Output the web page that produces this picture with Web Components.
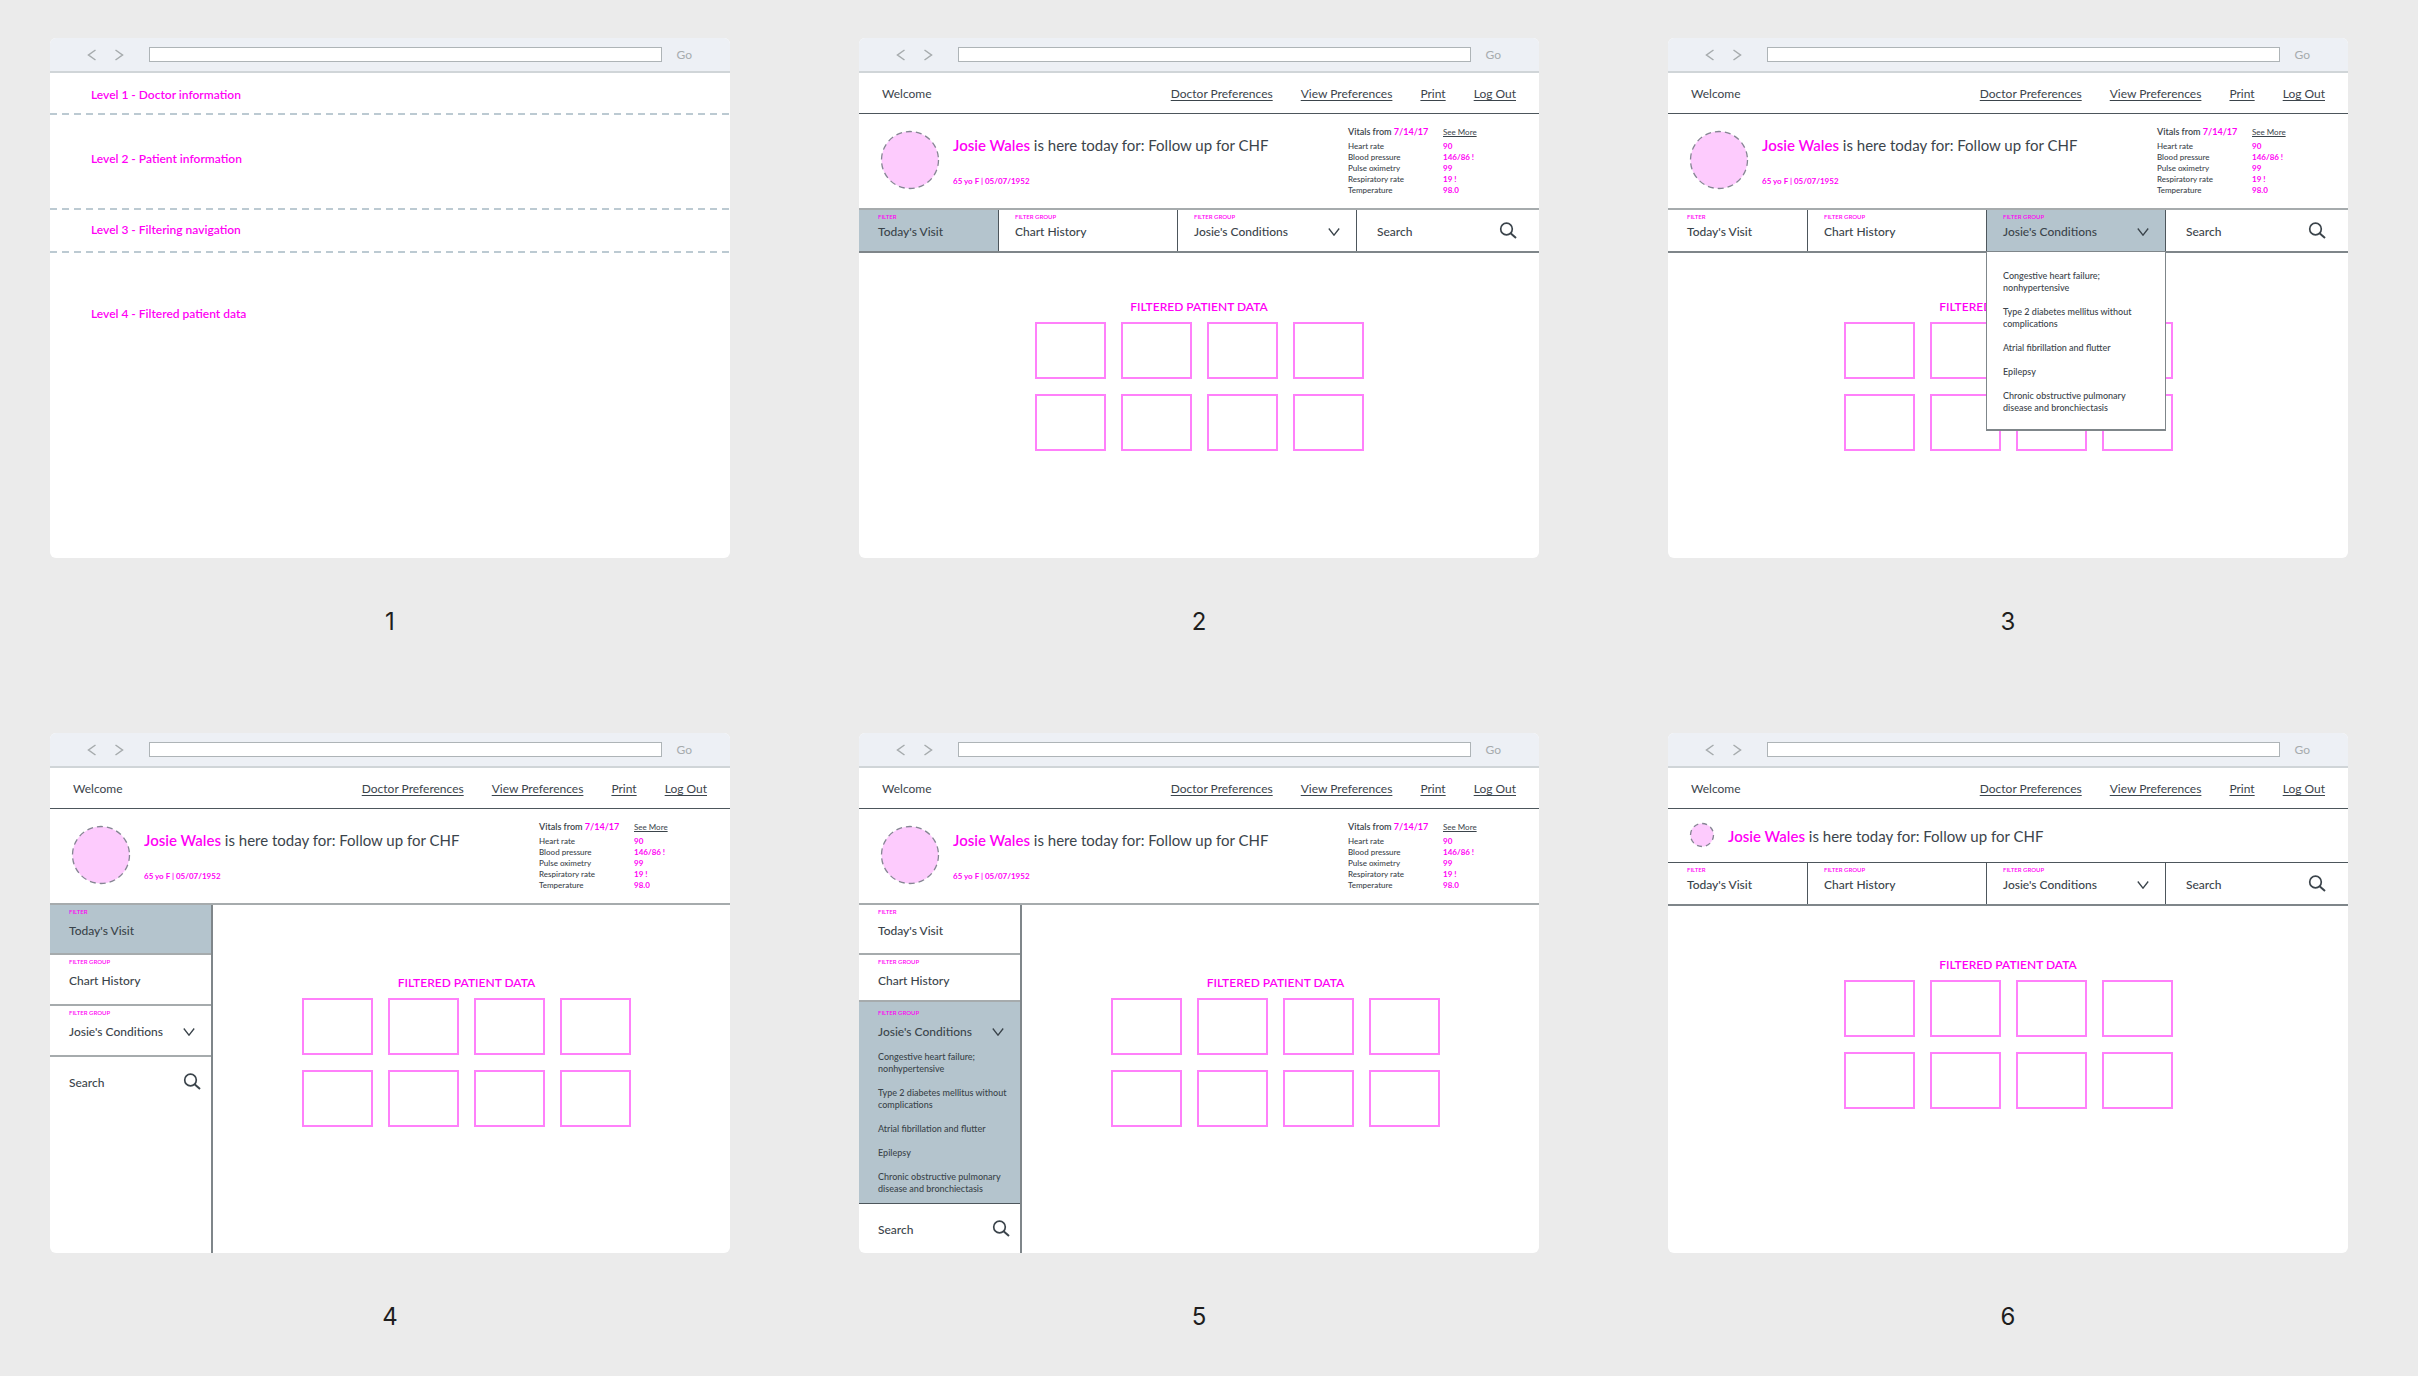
<!DOCTYPE html>
<html lang="en">
<head>
<meta charset="utf-8">
<title>Patient dashboard wireframes</title>
<style>
    body {
        margin: 0;
        background: #ebebeb;
        font-family: Lato, "Liberation Sans", sans-serif;
        color: #3b444b;
        --ink: #4d565c;
        --rule: #a6abad;
        --note: #ff00f5;
        --note-soft: #ff80fa;
        --active: #b4c4cd;
    }
</style>
</head>
<body>
<wire-board>
    <wire-frame number="1">
        <level-list></level-list>
    </wire-frame>
    <wire-frame number="2">
        <doctor-bar></doctor-bar>
        <patient-bar></patient-bar>
        <filter-nav active="visit"></filter-nav>
        <patient-data></patient-data>
    </wire-frame>
    <wire-frame number="3">
        <doctor-bar></doctor-bar>
        <patient-bar></patient-bar>
        <filter-nav active="conditions" open></filter-nav>
        <patient-data></patient-data>
    </wire-frame>
    <wire-frame number="4">
        <doctor-bar></doctor-bar>
        <patient-bar></patient-bar>
        <side-layout>
            <filter-nav slot="nav" side active="visit"></filter-nav>
            <patient-data></patient-data>
        </side-layout>
    </wire-frame>
    <wire-frame number="5">
        <doctor-bar></doctor-bar>
        <patient-bar></patient-bar>
        <side-layout>
            <filter-nav slot="nav" side active="conditions" open></filter-nav>
            <patient-data></patient-data>
        </side-layout>
    </wire-frame>
    <wire-frame number="6">
        <doctor-bar></doctor-bar>
        <patient-bar compact></patient-bar>
        <filter-nav></filter-nav>
        <patient-data roomy></patient-data>
    </wire-frame>
</wire-board>

<script>
class WireElement extends HTMLElement {
    connectedCallback() {
        if (this.shadowRoot) return;
        const template = document.createElement('template');
        template.innerHTML = this.render();
        this.attachShadow({mode: 'open'}).append(template.content.cloneNode(true));
    }
}

class WireBoard extends WireElement {
    render() {
        return `
            <style>
                :host {
                    display: grid;
                    grid-template-columns: repeat(3, 1fr);
                    column-gap: 129px;
                    row-gap: 95px;
                    padding: 38px 70px 0 50px;
                }
            </style>
            <slot></slot>
        `;
    }
}

class WireFrame extends WireElement {
    render() {
        const number = this.getAttribute('number');
        return `
            <style>
                :host {
                    display: block;
                }

                .window {
                    display: flex;
                    flex-direction: column;
                    min-height: 520px;
                    border-radius: 6px;
                    background: white;
                    overflow: hidden;
                }

                .toolbar {
                    display: flex;
                    align-items: center;
                    height: 33px;
                    padding: 0 38px 0 36px;
                    background: #edf0f5;
                    border-bottom: 2px solid #d0d5d8;
                }

                button {
                    padding: 0;
                    border: none;
                    background: none;
                    color: #a6abad;
                    font: 12px Lato, sans-serif;
                }

                .arrow {
                    display: flex;
                    width: 12px;
                    height: 12px;
                    margin-right: 15px;
                }

                .arrow + .arrow {
                    margin-right: 24px;
                }

                svg {
                    fill: none;
                    stroke: currentColor;
                    stroke-width: 1.5;
                }

                input {
                    flex: 1;
                    box-sizing: border-box;
                    min-width: 0;
                    height: 15px;
                    margin-right: 15px;
                    padding: 0 4px;
                    border: 1px solid #aeb4b7;
                    border-radius: 0;
                    background: white;
                    font-size: 10px;
                }

                .number {
                    margin: 48px 0 0;
                    text-align: center;
                    font: 24px/32px Inter, sans-serif;
                    color: #1e1e1e;
                }
            </style>
            <section class="window" aria-label="Wireframe ${number}">
                <div class="toolbar">
                    <button class="arrow" aria-label="Back">
                        <svg width="12" height="12"><path d="M9.5 1 2.5 6l7 5"/></svg>
                    </button>
                    <button class="arrow" aria-label="Forward">
                        <svg width="12" height="12"><path d="M2.5 1l7 5-7 5"/></svg>
                    </button>
                    <input type="text" aria-label="Address">
                    <button>Go</button>
                </div>
                <slot></slot>
            </section>
            <p class="number">${number}</p>
        `;
    }
}

class LevelList extends WireElement {
    render() {
        return `
            <style>
                :host {
                    display: block;
                    color: var(--note);
                    font-size: 12px;
                    font-weight: 600;
                    line-height: 16px;
                }

                div {
                    display: flex;
                    align-items: center;
                    box-sizing: border-box;
                    padding-left: 41px;
                    background: repeating-linear-gradient(90deg, #bccad2 0 7px, transparent 7px 12px) bottom / 100% 2px no-repeat;
                }

                .doctor { height: 42px; padding-top: 2px; }
                .patient { height: 95px; padding-bottom: 8px; }
                .filter { height: 43px; padding-bottom: 4px; }
                .data { height: 122px; background: none; }
            </style>
            <div class="doctor">Level 1 - Doctor information</div>
            <div class="patient">Level 2 - Patient information</div>
            <div class="filter">Level 3 - Filtering navigation</div>
            <div class="data">Level 4 - Filtered patient data</div>
        `;
    }
}

class DoctorBar extends WireElement {
    render() {
        return `
            <style>
                :host {
                    display: flex;
                    align-items: center;
                    justify-content: space-between;
                    height: 41px;
                    padding: 2px 23px 0;
                    box-sizing: border-box;
                    border-bottom: 1px solid var(--ink);
                    font-size: 12px;
                    line-height: 16px;
                }

                nav {
                    display: flex;
                    gap: 28px;
                }

                a {
                    color: inherit;
                    text-underline-offset: 2px;
                }
            </style>
            <span>Welcome</span>
            <nav>
                <a href="#doctor">Doctor Preferences</a>
                <a href="#view">View Preferences</a>
                <a href="#print">Print</a>
                <a href="#logout">Log Out</a>
            </nav>
        `;
    }
}

class PatientBar extends WireElement {
    render() {
        const compact = this.hasAttribute('compact');
        const vitals = [
            ['Heart rate', '90'],
            ['Blood pressure', '146/86 !'],
            ['Pulse oximetry', '99'],
            ['Respiratory rate', '19 !'],
            ['Temperature', '98.0']
        ];
        return `
            <style>
                :host {
                    display: flex;
                    height: 96px;
                    box-sizing: border-box;
                    padding-left: 22px;
                    border-bottom: 2px solid var(--rule);
                }

                :host([compact]) {
                    height: 54px;
                    border-bottom: 1px solid var(--ink);
                }

                .avatar {
                    width: 58px;
                    height: 58px;
                    margin: 17px 14px 0 0;
                    overflow: visible;
                    fill: #fdcbfd;
                    stroke: #858593;
                    stroke-width: 1.3;
                }

                :host([compact]) .avatar {
                    width: 24px;
                    height: 24px;
                    margin-top: 14px;
                }

                .who {
                    flex: 1;
                    padding-top: 21px;
                }

                :host([compact]) .who {
                    padding-top: 17px;
                }

                p {
                    margin: 0;
                }

                .reason {
                    font-size: 15px;
                    line-height: 20px;
                }

                .age {
                    margin-top: 20px;
                    font-size: 8px;
                    line-height: 12px;
                }

                b {
                    color: var(--note);
                    font-weight: 600;
                }

                .age, td {
                    color: var(--note);
                    font-weight: 700;
                }

                .vitals {
                    flex: none;
                    width: 191px;
                    padding-top: 12px;
                }

                .title {
                    display: grid;
                    grid-template-columns: 95px auto;
                    align-items: baseline;
                    font-size: 9px;
                    line-height: 12px;
                    font-weight: 600;
                    margin-bottom: 3px;
                }

                .title b {
                    font-weight: 700;
                }

                a {
                    color: inherit;
                    font-size: 8px;
                    font-weight: 400;
                    text-underline-offset: 1px;
                }

                table {
                    border-collapse: collapse;
                    font-size: 8px;
                    line-height: 11px;
                }

                th {
                    width: 95px;
                    padding: 0;
                    text-align: left;
                    font-weight: 500;
                }

                td {
                    padding: 0;
                }
            </style>
            <svg class="avatar" viewBox="0 0 ${compact ? '24 24' : '58 58'}" aria-hidden="true">
                ${compact
                    ? '<circle cx="12" cy="12" r="11.5" stroke-dasharray="5 4"/>'
                    : '<circle cx="29" cy="29" r="28.5" stroke-dasharray="6 4"/>'}
            </svg>
            <div class="who">
                <p class="reason"><b>Josie Wales</b> is here today for: Follow up for CHF</p>
                ${compact ? '' : '<p class="age">65 yo F | 05/07/1952</p>'}
            </div>
            ${compact ? '' : `
            <div class="vitals">
                <div class="title">
                    <span>Vitals from <b>7/14/17</b></span>
                    <a href="#vitals">See More</a>
                </div>
                <table>
                    ${vitals.map(([name, value]) => `<tr><th scope="row">${name}</th><td>${value}</td></tr>`).join('')}
                </table>
            </div>`}
        `;
    }
}

class FilterNav extends WireElement {
    render() {
        const active = this.getAttribute('active');
        const list = `
            <ul>
                <li>Congestive heart failure; nonhypertensive</li>
                <li>Type 2 diabetes mellitus without complications</li>
                <li>Atrial fibrillation and flutter</li>
                <li>Epilepsy</li>
                <li>Chronic obstructive pulmonary disease and bronchiectasis</li>
            </ul>
        `;
        return `
            <style>
                :host {
                    display: grid;
                    grid-template-columns: 140fr 179fr 179fr 182fr;
                    height: 43px;
                    box-sizing: border-box;
                    border-bottom: 2px solid #7f868a;
                }

                .item {
                    position: relative;
                    min-width: 0;
                    border-right: 1px solid var(--ink);
                }

                .item.active {
                    background: var(--active);
                }

                button {
                    display: block;
                    width: 100%;
                    padding: 4px 16px 0;
                    border: none;
                    background: none;
                    color: inherit;
                    font: inherit;
                    text-align: left;
                }

                .visit button {
                    padding-left: 19px;
                }

                small {
                    display: block;
                    color: var(--note);
                    font-size: 6px;
                    line-height: 6px;
                    font-weight: 600;
                }

                .label {
                    display: flex;
                    align-items: center;
                    justify-content: space-between;
                    margin-top: 4px;
                    font-size: 12px;
                    font-weight: 500;
                    line-height: 16px;
                }

                svg {
                    fill: none;
                    stroke: #3b444b;
                }

                .search {
                    display: flex;
                    align-items: center;
                    min-width: 0;
                    padding: 2px 22px 0 20px;
                }

                .search svg {
                    margin-bottom: 2px;
                }

                input {
                    flex: 1;
                    min-width: 0;
                    padding: 0;
                    border: none;
                    background: none;
                    font: 500 12px/16px Lato, sans-serif;
                    color: inherit;
                }

                input::placeholder {
                    color: inherit;
                    opacity: 1;
                }

                ul {
                    display: flex;
                    flex-direction: column;
                    gap: 12px;
                    margin: 0;
                    padding: 18px 16px 15px;
                    list-style: none;
                    font-size: 9px;
                    font-weight: 500;
                    line-height: 12px;
                }

                :host(:not([side])) ul {
                    position: absolute;
                    z-index: 1;
                    top: 100%;
                    left: -1px;
                    right: -1px;
                    border: 1px solid #7f868a;
                    border-bottom-width: 2px;
                    background: white;
                }

                :host([side]) {
                    display: block;
                    height: auto;
                    border-bottom: none;
                }

                :host([side]) .item {
                    min-height: 49px;
                    border-right: none;
                    border-bottom: 2px solid var(--rule);
                }

                :host([side]) .visit {
                    min-height: 48px;
                }

                :host([side]) button {
                    padding: 4px 16px 0 19px;
                }

                :host([side]) .label {
                    margin-top: 8px;
                }

                :host([side]) .search {
                    padding: 16px 10px 14px 19px;
                }

                :host([side]) ul {
                    padding: 11px 10px 8px 19px;
                }

                /* the open group grows upwards into the one above it */
                :host([side][open]) .history {
                    min-height: 45px;
                }

                :host([side][open]) .conditions {
                    padding-top: 4px;
                    border-bottom: 1px solid var(--ink);
                }
            </style>
            <div class="item visit ${active === 'visit' ? 'active' : ''}">
                <button><small>FILTER</small><span class="label">Today's Visit</span></button>
            </div>
            <div class="item history">
                <button><small>FILTER GROUP</small><span class="label">Chart History</span></button>
            </div>
            <div class="item conditions ${active === 'conditions' ? 'active' : ''}">
                <button>
                    <small>FILTER GROUP</small>
                    <span class="label">Josie's Conditions
                        <svg width="12" height="8"><path d="M.8.5 6 7.2 11.2.5" stroke-width="1.3"/></svg>
                    </span>
                </button>
                ${this.hasAttribute('open') ? list : ''}
            </div>
            <label class="search">
                <input type="text" placeholder="Search" aria-label="Search">
                <svg width="18" height="17"><circle cx="7.5" cy="7" r="5.8" stroke-width="1.7"/><path d="M11.6 11.2 17 16" stroke-width="2"/></svg>
            </label>
        `;
    }
}

class SideLayout extends WireElement {
    render() {
        return `
            <style>
                :host {
                    display: flex;
                    flex: 1;
                }

                .side {
                    flex: none;
                    width: 161px;
                    border-right: 2px solid #7f868a;
                }

                .main {
                    flex: 1;
                    padding: 24px 10px 0 0;
                }
            </style>
            <div class="side"><slot name="nav"></slot></div>
            <div class="main"><slot></slot></div>
        `;
    }
}

class PatientData extends WireElement {
    render() {
        return `
            <style>
                :host {
                    display: block;
                    padding-top: 46px;
                }

                :host([roomy]) {
                    padding-top: 51px;
                }

                h2 {
                    margin: 0 0 7px;
                    text-align: center;
                    font-size: 12px;
                    line-height: 16px;
                    font-weight: 600;
                    color: var(--note);
                }

                .grid {
                    display: grid;
                    grid-template-columns: repeat(4, 71px);
                    grid-auto-rows: 57px;
                    gap: 15px;
                    justify-content: center;
                }

                .grid div {
                    border: 2px solid var(--note-soft);
                }
            </style>
            <h2>FILTERED PATIENT DATA</h2>
            <div class="grid">${'<div></div>'.repeat(8)}</div>
        `;
    }
}

customElements.define('wire-board', WireBoard);
customElements.define('wire-frame', WireFrame);
customElements.define('level-list', LevelList);
customElements.define('doctor-bar', DoctorBar);
customElements.define('patient-bar', PatientBar);
customElements.define('filter-nav', FilterNav);
customElements.define('side-layout', SideLayout);
customElements.define('patient-data', PatientData);
</script>
</body>
</html>
